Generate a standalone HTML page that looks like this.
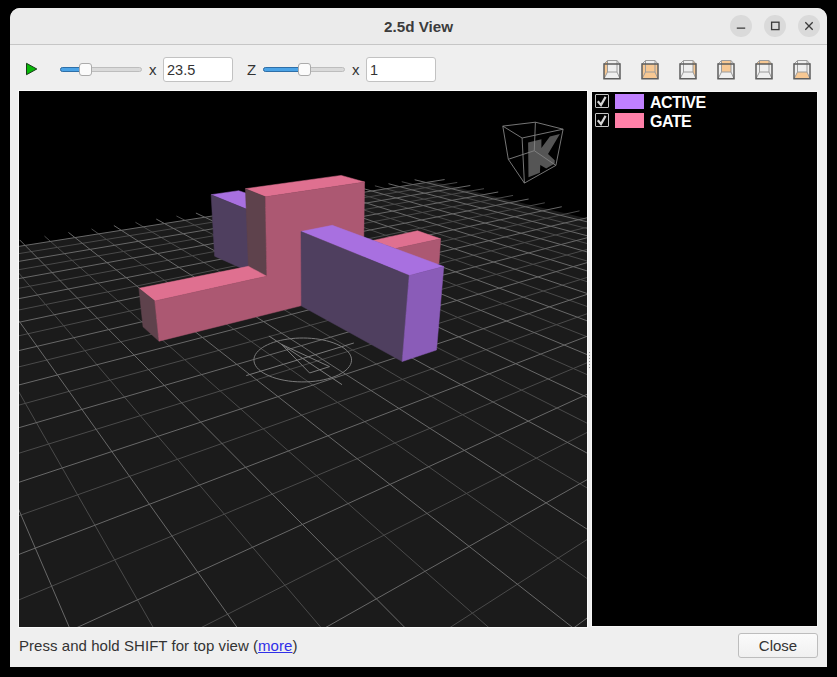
<!DOCTYPE html>
<html><head><meta charset="utf-8">
<style>
*{margin:0;padding:0;box-sizing:border-box}
html,body{width:837px;height:677px;background:#000;overflow:hidden;font-family:"Liberation Sans",sans-serif}
.abs{position:absolute}
#win{position:absolute;left:10px;top:8px;width:817px;height:659px;background:#efefef;border-radius:10px 10px 0 0;overflow:hidden}
#title{position:absolute;left:0;top:0;width:817px;height:37px;background:#ebebeb;border-bottom:1px solid #c6c6c6}
#ttext{position:absolute;left:0;top:0.6px;width:817px;height:36px;line-height:36px;text-align:center;font-weight:bold;font-size:15.2px;color:#3c3c3c}
.tbtn{position:absolute;top:7px;width:22px;height:22px;border-radius:50%;background:#dadada}
.groove{position:absolute;height:5px;border-radius:3px;background:#dadada;border:1px solid #bdbdbd}
.gfill{position:absolute;height:5px;border-radius:3px 0 0 3px;background:#4ba3e6;border:1px solid #2e6fa8}
.handle{position:absolute;width:13px;height:13px;border-radius:3px;background:#fbfbfb;border:1px solid #ababab}
.inp{position:absolute;height:25px;background:#fff;border:1px solid #c2c2c2;border-radius:3px;font-size:14.5px;color:#333;padding-left:3px;line-height:25px}
.lbl{position:absolute;font-size:15px;color:#333}
#canvas{position:absolute;left:19px;top:91px;width:568px;height:536px;background:#000;outline:1px solid #fafafa}
#panel{position:absolute;left:592px;top:92px;width:225px;height:534px;background:#000;outline:1px solid #f6f6f6}
.cb{position:absolute;left:3px;width:14px;height:14px;border:1.5px solid #c4c4c4;border-radius:1px}
.sw{position:absolute;left:23px;width:29px;height:15px}
.ln{position:absolute;left:58px;font-weight:bold;font-size:16px;color:#fff;letter-spacing:-0.5px;line-height:16px}
</style></head><body>
<div id="win">
  <div id="title"><div id="ttext">2.5d View</div>
    <div class="tbtn" style="left:720px"><svg width="22" height="22" class="abs" style="left:0;top:0"><path d="M6.8 13.2H15.2" stroke="#3a3a3a" stroke-width="1.3"/></svg></div>
    <div class="tbtn" style="left:754px"><svg width="22" height="22" class="abs" style="left:0;top:0"><rect x="7.6" y="7.2" width="7.4" height="7.4" stroke="#3a3a3a" stroke-width="1.3" fill="none"/></svg></div>
    <div class="tbtn" style="left:788px"><svg width="22" height="22" class="abs" style="left:0;top:0"><path d="M7.3 7.2L14.7 14.8M14.7 7.2L7.3 14.8" stroke="#3a3a3a" stroke-width="1.3"/></svg></div>
  </div>
</div>
<!-- toolbar, absolute to page -->
<svg class="abs" style="left:24px;top:61px" width="16" height="16"><polygon points="2.5,2.3 12.8,8 2.5,13.7" fill="#08b808" stroke="#1a3a1a" stroke-width="1"/></svg>
<div class="groove" style="left:60px;top:67px;width:82px"></div>
<div class="gfill" style="left:60px;top:67px;width:22px"></div>
<div class="handle" style="left:79px;top:63px"></div>
<div class="lbl" style="left:149px;top:61px">x</div>
<div class="inp" style="left:163px;top:57px;width:70px">23.5</div>
<div class="lbl" style="left:247px;top:61px">Z</div>
<div class="groove" style="left:263px;top:67px;width:82px"></div>
<div class="gfill" style="left:263px;top:67px;width:38px"></div>
<div class="handle" style="left:298px;top:63px"></div>
<div class="lbl" style="left:352px;top:61px">x</div>
<div class="inp" style="left:366px;top:57px;width:70px">1</div>
<svg class="abs" style="left:602.0px;top:59.0px" width="22" height="23"><polygon points="2.0,5.0 5.5,1.5 5.5,13.0 2.0,19.75" fill="#f7c893"/><path d="M5.5,1.5H15.0V13.0H5.5ZM2.0,5.0L5.5,1.5M18.0,5.0L15.0,1.5M2.0,19.75L5.5,13.0M18.0,19.75L15.0,13.0" stroke="#9c9c9c" stroke-width="1" fill="none"/><rect x="2.0" y="5.0" width="16.0" height="14.75" stroke="#5e5e5e" stroke-width="1.5" fill="none"/></svg>
<svg class="abs" style="left:640.0px;top:59.0px" width="22" height="23"><rect x="2.0" y="5.0" width="16.0" height="14.75" fill="#f7c893"/><path d="M5.5,1.5H15.0V13.0H5.5ZM2.0,5.0L5.5,1.5M18.0,5.0L15.0,1.5M2.0,19.75L5.5,13.0M18.0,19.75L15.0,13.0" stroke="#9c9c9c" stroke-width="1" fill="none"/><rect x="2.0" y="5.0" width="16.0" height="14.75" stroke="#5e5e5e" stroke-width="1.5" fill="none"/></svg>
<svg class="abs" style="left:678.0px;top:59.0px" width="22" height="23"><polygon points="18.0,5.0 15.0,1.5 15.0,13.0 18.0,19.75" fill="#f7c893"/><path d="M5.5,1.5H15.0V13.0H5.5ZM2.0,5.0L5.5,1.5M18.0,5.0L15.0,1.5M2.0,19.75L5.5,13.0M18.0,19.75L15.0,13.0" stroke="#9c9c9c" stroke-width="1" fill="none"/><rect x="2.0" y="5.0" width="16.0" height="14.75" stroke="#5e5e5e" stroke-width="1.5" fill="none"/></svg>
<svg class="abs" style="left:716.0px;top:59.0px" width="22" height="23"><rect x="5.5" y="1.5" width="9.5" height="11.5" fill="#f7c893"/><path d="M5.5,1.5H15.0V13.0H5.5ZM2.0,5.0L5.5,1.5M18.0,5.0L15.0,1.5M2.0,19.75L5.5,13.0M18.0,19.75L15.0,13.0" stroke="#9c9c9c" stroke-width="1" fill="none"/><rect x="2.0" y="5.0" width="16.0" height="14.75" stroke="#5e5e5e" stroke-width="1.5" fill="none"/></svg>
<svg class="abs" style="left:754.0px;top:59.0px" width="22" height="23"><polygon points="2.0,5.0 5.5,1.5 15.0,1.5 18.0,5.0" fill="#f7c893"/><path d="M5.5,1.5H15.0V13.0H5.5ZM2.0,5.0L5.5,1.5M18.0,5.0L15.0,1.5M2.0,19.75L5.5,13.0M18.0,19.75L15.0,13.0" stroke="#9c9c9c" stroke-width="1" fill="none"/><rect x="2.0" y="5.0" width="16.0" height="14.75" stroke="#5e5e5e" stroke-width="1.5" fill="none"/></svg>
<svg class="abs" style="left:792.0px;top:59.0px" width="22" height="23"><polygon points="2.0,19.75 5.5,13.0 15.0,13.0 18.0,19.75" fill="#f7c893"/><path d="M5.5,1.5H15.0V13.0H5.5ZM2.0,5.0L5.5,1.5M18.0,5.0L15.0,1.5M2.0,19.75L5.5,13.0M18.0,19.75L15.0,13.0" stroke="#9c9c9c" stroke-width="1" fill="none"/><rect x="2.0" y="5.0" width="16.0" height="14.75" stroke="#5e5e5e" stroke-width="1.5" fill="none"/></svg>
<div id="canvas"><svg width="568" height="536" class="abs" style="left:0;top:0">
<polygon points="-203.31,187.28 413.28,90.49 1072.19,248.51 -194.96,1608.58" fill="#1b1b1b"/>
<path d="M-203.35,179.95L-194.96,1608.58M-139.07,170.16L164.31,1222.96M-79.88,161.15L388.55,982.29M-25.20,152.82L541.83,817.76M25.48,145.10L653.25,698.18M72.57,137.93L737.88,607.34M116.45,131.25L804.36,535.99M157.43,125.01L857.95,478.46M195.79,119.17L902.08,431.10M231.78,113.69L939.04,391.43M265.60,108.54L970.45,357.71M297.45,103.69L997.48,328.70M327.49,99.12L1020.98,303.48M355.88,94.79L1041.60,281.35M382.74,90.70L1059.84,261.77M-203.26,195.59L438.23,91.47M-203.15,214.02L464.99,97.68M-203.02,235.35L494.07,104.43M-202.88,260.31L525.80,111.79M-202.70,289.92L560.54,119.85M-202.49,325.61L598.75,128.72M-202.24,369.47L640.98,138.52M-201.91,424.66L687.89,149.41M-201.49,496.22L740.32,161.57M-200.92,592.71L799.28,175.25M-200.12,729.90L866.10,190.76M-198.88,940.44L942.44,208.47M-196.74,1304.61L1030.50,228.91" stroke="#4a4a4a" stroke-width="1" fill="none"/>
<path d="M-170.54,174.95L8.18,1390.54M-108.88,165.56L288.06,1090.15M-52.01,156.90L471.77,892.96M0.61,148.89L601.62,753.58M49.45,141.45L698.27,649.85M94.89,134.53L773.00,569.64M137.29,128.08L832.52,505.76M176.92,122.04L881.03,453.69M214.07,116.39L921.34,410.42M248.94,111.08L955.36,373.91M281.76,106.08L984.45,342.68M312.68,101.37L1009.63,315.66M341.88,96.92L1031.61,292.06M369.49,92.72L1050.99,271.27M395.64,88.74L1068.19,252.81M-203.31,187.28L425.64,88.55M-203.21,204.48L451.34,94.51M-203.09,224.28L479.22,100.99M-202.95,247.32L509.58,108.03M-202.79,274.46L542.77,115.73M-202.60,306.90L579.18,124.18M-202.37,346.36L619.33,133.50M-202.08,395.39L663.81,143.82M-201.72,457.97L713.36,155.32M-201.23,540.60L768.91,168.21M-200.56,654.76L831.61,182.76M-199.57,822.76L902.95,199.31M-197.98,1094.44L984.84,218.31M-194.96,1608.58L1079.80,240.35" stroke="#686868" stroke-width="1" fill="none"/>
<polyline points="322.65,255.70 324.99,257.21 327.05,258.82 328.80,260.51 330.24,262.27 331.34,264.10 332.09,265.96 332.49,267.86 332.51,269.78 332.16,271.71 331.43,273.62 330.32,275.51 328.84,277.36 326.98,279.15 324.75,280.86 322.18,282.49 319.28,284.01 316.07,285.41 312.57,286.68 308.81,287.80 304.83,288.77 300.66,289.56 296.33,290.18 291.89,290.62 287.37,290.87 282.81,290.92 278.27,290.79 273.77,290.47 269.37,289.96 265.10,289.27 261.00,288.40 257.11,287.38 253.45,286.19 250.06,284.87 246.97,283.42 244.20,281.86 241.77,280.19 239.70,278.45 237.98,276.63 236.65,274.77 235.69,272.86 235.12,270.94 234.92,269.02 235.09,267.11 235.63,265.22 236.53,263.37 237.77,261.57 239.34,259.83 241.22,258.18 243.39,256.60 245.83,255.12 248.54,253.75 251.47,252.48 254.61,251.34 257.94,250.31 261.44,249.42 265.08,248.66 268.83,248.04 272.68,247.57 276.60,247.23 280.56,247.04 284.54,247.00 288.52,247.10 292.46,247.35 296.35,247.74 300.17,248.27 303.88,248.95 307.46,249.76 310.89,250.70 314.15,251.78 317.21,252.97 320.05,254.28 322.65,255.70" stroke="#7a7a7a" stroke-width="1" fill="none"/>
<path d="M249.88,244.95L323.04,293.65M227.28,284.58L334.82,252.01" stroke="#7a7a7a" stroke-width="1" fill="none"/>
<polygon points="262.57,253.39 310.55,275.62 290.63,281.97" stroke="#7a7a7a" stroke-width="1" fill="none"/>
<polygon points="192.10,103.70 219.70,99.70 231.00,103.50 231.00,119.60" fill="#a870e0" stroke="#a870e0" stroke-width="0.5" stroke-linejoin="round"/>
<polygon points="192.10,103.70 231.00,119.60 231.00,181.00 195.60,165.20" fill="#4f3f5f" stroke="#4f3f5f" stroke-width="0.5" stroke-linejoin="round"/>
<polygon points="354.40,149.40 398.50,139.75 421.60,147.80 376.50,157.50" fill="#df7090" stroke="#df7090" stroke-width="0.5" stroke-linejoin="round"/>
<polygon points="376.50,157.50 421.60,147.80 420.00,172.50 381.00,189.00" fill="#ac5872" stroke="#ac5872" stroke-width="0.5" stroke-linejoin="round"/>
<polygon points="226.40,97.70 322.20,84.40 345.60,91.00 246.40,105.80" fill="#df7090" stroke="#df7090" stroke-width="0.5" stroke-linejoin="round"/>
<polygon points="226.40,97.70 246.40,105.80 247.80,185.20 229.40,175.30" fill="#5e424c" stroke="#5e424c" stroke-width="0.5" stroke-linejoin="round"/>
<polygon points="119.90,197.30 229.40,175.30 247.80,185.20 135.80,210.00" fill="#df7090" stroke="#df7090" stroke-width="0.5" stroke-linejoin="round"/>
<polygon points="119.90,197.30 135.80,210.00 140.00,250.20 124.00,235.80" fill="#5e424c" stroke="#5e424c" stroke-width="0.5" stroke-linejoin="round"/>
<polygon points="135.80,210.00 247.80,185.20 246.40,105.80 345.60,91.00 344.00,199.00 281.80,214.80 140.00,250.20" fill="#ac5872" stroke="#ac5872" stroke-width="0.5" stroke-linejoin="round"/>
<polygon points="282.00,140.50 313.30,134.30 424.80,175.50 390.20,184.50" fill="#a870e0" stroke="#a870e0" stroke-width="0.5" stroke-linejoin="round"/>
<polygon points="282.00,140.50 390.20,184.50 383.20,270.50 282.40,215.00" fill="#4f3f5f" stroke="#4f3f5f" stroke-width="0.5" stroke-linejoin="round"/>
<polygon points="390.20,184.50 424.80,175.50 417.50,259.00 383.20,270.50" fill="#8a5cb8" stroke="#8a5cb8" stroke-width="0.5" stroke-linejoin="round"/>
<polygon points="509.10,51.50 522.40,48.20 522.40,57.10 530.90,45.60 540.90,43.10 529.00,63.00 535.70,69.30 535.70,72.60 527.20,77.40 521.30,74.10 520.90,81.80 509.50,86.20" fill="#555"/>
<path d="M483.80,35.10L516.40,31.20M516.40,31.20L544.10,38.20M544.10,38.20L503.10,47.00M503.10,47.00L483.80,35.10M489.30,68.30L515.30,59.70M515.30,59.70L536.90,74.40M536.90,74.40L505.40,92.10M505.40,92.10L489.30,68.30M483.80,35.10L489.30,68.30M516.40,31.20L515.30,59.70M544.10,38.20L536.90,74.40M503.10,47.00L505.40,92.10" stroke="#828282" stroke-width="0.9" fill="none"/>
</svg></div>
<div class="abs" style="left:589px;top:352px;width:1.2px;height:1.2px;background:#9a9a9a"></div><div class="abs" style="left:589px;top:355px;width:1.2px;height:1.2px;background:#9a9a9a"></div><div class="abs" style="left:589px;top:358px;width:1.2px;height:1.2px;background:#9a9a9a"></div><div class="abs" style="left:589px;top:361px;width:1.2px;height:1.2px;background:#9a9a9a"></div><div class="abs" style="left:589px;top:364px;width:1.2px;height:1.2px;background:#9a9a9a"></div><div class="abs" style="left:589px;top:367px;width:1.2px;height:1.2px;background:#9a9a9a"></div>
<div id="panel">
  <div class="cb" style="top:2px"><svg width="12" height="12" class="abs" style="left:-0.5px;top:-0.5px"><path d="M1.8 6.2L5 10L9.6 1.9" stroke="#d4d4d4" stroke-width="2.2" fill="none"/></svg></div>
  <div class="sw" style="top:2px;background:#c080ff"></div>
  <div class="ln" style="top:2.5px">ACTIVE</div>
  <div class="cb" style="top:21px"><svg width="12" height="12" class="abs" style="left:-0.5px;top:-0.5px"><path d="M1.8 6.2L5 10L9.6 1.9" stroke="#d4d4d4" stroke-width="2.2" fill="none"/></svg></div>
  <div class="sw" style="top:21px;background:#ff80a8"></div>
  <div class="ln" style="top:22px">GATE</div>
</div>
<div class="lbl" style="left:19px;top:636.7px;font-size:15px;letter-spacing:0.05px">Press and hold SHIFT for top view (<span style="color:#3030e8;text-decoration:underline">more</span>)</div>
<div class="abs" style="left:738px;top:633px;width:80px;height:25px;border:1px solid #bdbdbd;border-radius:3px;background:linear-gradient(#fbfbfb,#f0f0f0);font-size:15px;color:#333;text-align:center;line-height:23px">Close</div>
</body></html>
